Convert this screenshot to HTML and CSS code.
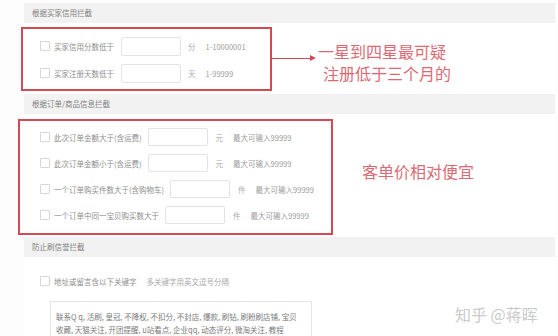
FILE: index.html
```html
<!DOCTYPE html>
<html lang="zh-CN">
<head>
    <meta charset="UTF-8">
    <meta name="viewport" content="width=device-width, initial-scale=1.0">
    <title>拦截设置</title>

    <link rel="stylesheet" href="styles.css">
</head>
<body>

    <div class="page">
        <div class="sec-head">根据买家信用拦截</div>
        <div class="sec-body sec-credit">
            <div class="mark mark-credit">
                <div class="row">
                    <input type="checkbox" class="chk">
                    <span class="label">买家信用分数低于</span>
                    <input type="text" class="num num-credit">
                    <span class="unit">分</span>
                    <span class="hint">1-10000001</span>
                </div>
                <div class="row">
                    <input type="checkbox" class="chk">
                    <span class="label">买家注册天数低于</span>
                    <input type="text" class="num num-credit">
                    <span class="unit">天</span>
                    <span class="hint">1-99999</span>
                </div>
            </div>
            <div class="arrow"></div>
            <div class="note note-credit">
                <div>一星到四星最可疑</div>
                <div class="indent">注册低于三个月的</div>
            </div>
        </div>

        <div class="sec-head">根据订单/商品信息拦截</div>
        <div class="sec-body sec-order">
            <div class="mark mark-order">
                <div class="row row-order">
                    <input type="checkbox" class="chk">
                    <span class="label">此次订单金额大于(含运费)</span>
                    <input type="text" class="num">
                    <span class="unit">元</span>
                    <span class="hint">最大可输入99999</span>
                </div>
                <div class="row row-order">
                    <input type="checkbox" class="chk">
                    <span class="label">此次订单金额小于(含运费)</span>
                    <input type="text" class="num">
                    <span class="unit">元</span>
                    <span class="hint">最大可输入99999</span>
                </div>
                <div class="row row-order">
                    <input type="checkbox" class="chk">
                    <span class="label">一个订单购买件数大于(含购物车)</span>
                    <input type="text" class="num">
                    <span class="unit">件</span>
                    <span class="hint">最大可输入99999</span>
                </div>
                <div class="row row-order">
                    <input type="checkbox" class="chk">
                    <span class="label">一个订单中同一宝贝购买数大于</span>
                    <input type="text" class="num">
                    <span class="unit">件</span>
                    <span class="hint">最大可输入99999</span>
                </div>
            </div>
            <div class="note note-order">客单价相对便宜</div>
        </div>

        <div class="sec-head">防止刷信誉拦截</div>
        <div class="sec-body sec-spam">
            <div class="row row-spam">
                <input type="checkbox" class="chk">
                <span class="label">地址或留言含以下关键字</span>
                <span class="hint hint-spam">多关键字用英文逗号分隔</span>
            </div>
            <div class="keywords">
                联系Q q, 活刷, 皇冠, 不降权, 不扣分, 不封店, 爆款, 刷钻, 刷粉刷店铺, 宝贝<br>
                收藏, 天猫关注, 开团提醒, u站看点, 企业qq, 动态评分, 微淘关注, 教程
            </div>
        </div>
    </div>

    <div class="watermark">知乎 @蒋晖</div>

</body>
</html>
```

FILE: styles.css
```css
body {
    margin: 0;
    height: 336px;
    overflow: hidden;
    background: #fdfdfd;
    font-family: "Noto Sans CJK SC", "Noto Sans", sans-serif;
    color: #888;
}

.page {
    margin-left: 24px;
    width: 531px;
    padding-top: 3px;
}

.sec-head {
    height: 20px;
    line-height: 20px;
    padding-left: 8px;
    background: #f2f2f2;
    font-size: 7.5px;
    color: #808080;
}

.sec-body {
    background: #fff;
    display: flex;
    align-items: center;
}

.sec-credit {
    height: 71px;
}

.sec-order {
    height: 123px;
    align-items: flex-start;
}

.sec-spam {
    display: block;
    height: 80px;
    padding-top: 18px;
}

/* red annotation boxes */
.mark {
    box-sizing: border-box;
    border: 2px solid #d34a55;
    display: flex;
    flex-direction: column;
    gap: 8px;
}

.mark-credit {
    width: 251px;
    height: 64px;
    margin-left: -3px;
    padding: 8px 0 6px 17px;
}

.mark-order {
    width: 315px;
    height: 116px;
    margin-left: -6px;
    margin-top: 5px;
    padding: 7px 0 9px 20px;
}

.row {
    display: flex;
    align-items: center;
    height: 19px;
    font-size: 7.5px;
}

.row-order {
    height: 18px;
}

.row-spam {
    height: 12px;
    padding-left: 16px;
}

.chk {
    appearance: none;
    box-sizing: border-box;
    width: 10px;
    height: 10px;
    margin: 0 4px 0 0;
    border: 1px solid #d6d6d6;
    border-radius: 1px;
    background: #fff;
}

.label {
    color: #8e8e8e;
}

.num {
    box-sizing: border-box;
    width: 60px;
    height: 100%;
    margin: 0 8px 0 6px;
    border: 1px solid #e3e3e3;
    border-radius: 2px;
    background: #fff;
    outline: none;
}

.num-credit {
    margin-left: 7px;
    margin-right: 7px;
}

.unit {
    color: #aaa;
    margin-right: 10px;
}

.hint {
    color: #9c9c9c;
}

.hint-spam {
    margin-left: 10px;
    color: #aaa;
}

/* handwritten notes beside the boxes */
.arrow {
    position: relative;
    width: 42px;
    height: 1px;
    background: #d34a55;
}

.arrow::after {
    content: "";
    position: absolute;
    right: -2px;
    top: -3px;
    border-left: 6px solid #d34a55;
    border-top: 3.5px solid transparent;
    border-bottom: 3.5px solid transparent;
}

.note {
    color: #dc6a75;
    font-size: 16px;
}

.note-credit {
    margin-left: 4px;
    margin-top: 6px;
    line-height: 22px;
}

.note-credit .indent {
    padding-left: 5px;
}

.note-order {
    margin-left: 29px;
    margin-top: 47px;
    line-height: 20px;
}

.keywords {
    box-sizing: border-box;
    width: 262px;
    margin: 14px 0 0 26px;
    padding: 8px 5px;
    border: 1px solid #e6e6e6;
    background: #fff;
    font-size: 7.5px;
    line-height: 13px;
    color: #7a7a7a;
    white-space: nowrap;
}

.watermark {
    position: absolute;
    left: 455px;
    top: 302px;
    font-size: 16px;
    color: #cacaca;
    font-family: "Noto Sans CJK SC", sans-serif;
}
```
